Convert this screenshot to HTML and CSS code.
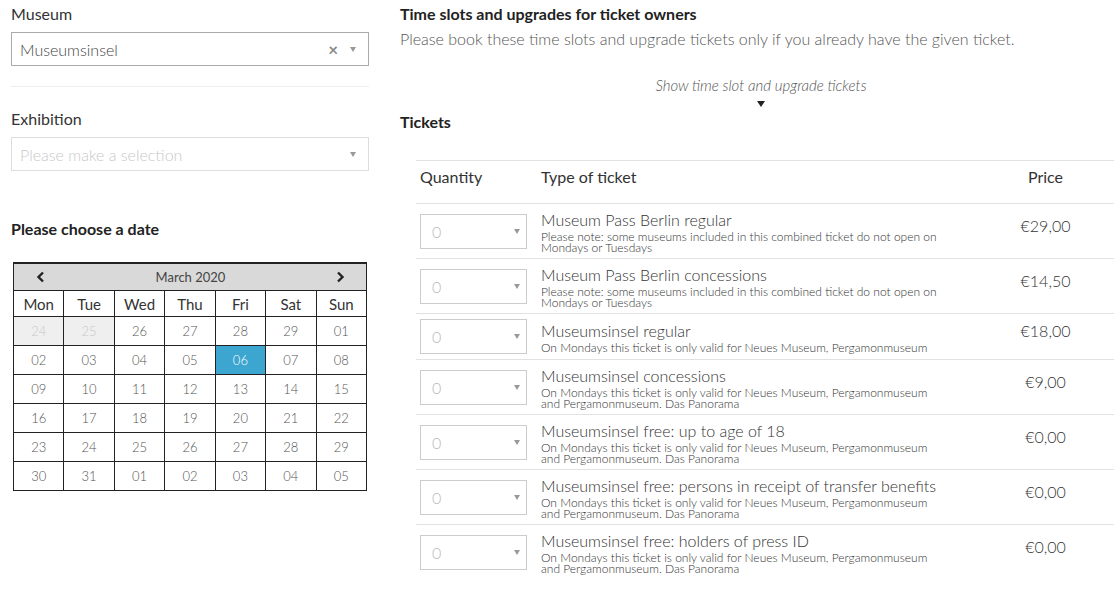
FILE: index.html
```html
<!DOCTYPE html>
<html lang="en">
<head>
<meta charset="utf-8">
<title>Tickets</title>
<link rel="stylesheet" href="styles.css">
</head>
<body>
<div class="page">
  <aside class="side">
    <div class="field">
      <label class="label">Museum</label>
      <div class="select">
        <span class="value">Museumsinsel</span>
        <span class="clear">×</span>
        <span class="caret"></span>
      </div>
    </div>
    <hr class="sep">
    <div class="field">
      <label class="label">Exhibition</label>
      <div class="select select-empty">
        <span class="value placeholder">Please make a selection</span>
        <span class="caret"></span>
      </div>
    </div>
    <h3 class="date-title">Please choose a date</h3>
    <table class="cal">
      <tr class="cal-head">
        <th colspan="7">
          <div class="cal-bar">
            <svg class="chev" width="9" height="12" viewBox="0 0 9 12"><path d="M7 1.5 L2.5 6 L7 10.5" fill="none" stroke="#222" stroke-width="2.4"/></svg>
            <span>March 2020</span>
            <svg class="chev" width="9" height="12" viewBox="0 0 9 12"><path d="M2 1.5 L6.5 6 L2 10.5" fill="none" stroke="#222" stroke-width="2.4"/></svg>
          </div>
        </th>
      </tr>
      <tr class="names"><td>Mon</td><td>Tue</td><td>Wed</td><td>Thu</td><td>Fri</td><td>Sat</td><td>Sun</td></tr>
      <tr class="dates"><td class="off">24</td><td class="off">25</td><td>26</td><td>27</td><td>28</td><td>29</td><td>01</td></tr>
      <tr class="dates"><td>02</td><td>03</td><td>04</td><td>05</td><td class="sel">06</td><td>07</td><td>08</td></tr>
      <tr class="dates"><td>09</td><td>10</td><td>11</td><td>12</td><td>13</td><td>14</td><td>15</td></tr>
      <tr class="dates"><td>16</td><td>17</td><td>18</td><td>19</td><td>20</td><td>21</td><td>22</td></tr>
      <tr class="dates"><td>23</td><td>24</td><td>25</td><td>26</td><td>27</td><td>28</td><td>29</td></tr>
      <tr class="dates"><td>30</td><td>31</td><td>01</td><td>02</td><td>03</td><td>04</td><td>05</td></tr>
    </table>
  </aside>

  <main class="main">
    <h3 class="h">Time slots and upgrades for ticket owners</h3>
    <p class="desc">Please book these time slots and upgrade tickets only if you already have the given ticket.</p>
    <div class="toggle">
      <span class="toggle-text">Show time slot and upgrade tickets</span>
      <span class="toggle-arrow"></span>
    </div>
    <h3 class="h tickets-h">Tickets</h3>

    <table class="tickets">
      <tr class="thead">
        <td class="c-qty">Quantity</td>
        <td class="c-type">Type of ticket</td>
        <td class="c-price">Price</td>
      </tr>
      <tr>
        <td class="c-qty"><div class="qty"><span>0</span><span class="caret"></span></div></td>
        <td class="c-type"><div class="t-title">Museum Pass Berlin regular</div><div class="t-note">Please note: some museums included in this combined ticket do not open on Mondays or Tuesdays</div></td>
        <td class="c-price price">€29,00</td>
      </tr>
      <tr>
        <td class="c-qty"><div class="qty"><span>0</span><span class="caret"></span></div></td>
        <td class="c-type"><div class="t-title">Museum Pass Berlin concessions</div><div class="t-note">Please note: some museums included in this combined ticket do not open on Mondays or Tuesdays</div></td>
        <td class="c-price price">€14,50</td>
      </tr>
      <tr>
        <td class="c-qty"><div class="qty"><span>0</span><span class="caret"></span></div></td>
        <td class="c-type"><div class="t-title">Museumsinsel regular</div><div class="t-note">On Mondays this ticket is only valid for Neues Museum, Pergamonmuseum</div></td>
        <td class="c-price price">€18,00</td>
      </tr>
      <tr>
        <td class="c-qty"><div class="qty"><span>0</span><span class="caret"></span></div></td>
        <td class="c-type"><div class="t-title">Museumsinsel concessions</div><div class="t-note">On Mondays this ticket is only valid for Neues Museum, Pergamonmuseum and Pergamonmuseum. Das Panorama</div></td>
        <td class="c-price price">€9,00</td>
      </tr>
      <tr>
        <td class="c-qty"><div class="qty"><span>0</span><span class="caret"></span></div></td>
        <td class="c-type"><div class="t-title">Museumsinsel free: up to age of 18</div><div class="t-note">On Mondays this ticket is only valid for Neues Museum, Pergamonmuseum and Pergamonmuseum. Das Panorama</div></td>
        <td class="c-price price">€0,00</td>
      </tr>
      <tr>
        <td class="c-qty"><div class="qty"><span>0</span><span class="caret"></span></div></td>
        <td class="c-type"><div class="t-title">Museumsinsel free: persons in receipt of transfer benefits</div><div class="t-note">On Mondays this ticket is only valid for Neues Museum, Pergamonmuseum and Pergamonmuseum. Das Panorama</div></td>
        <td class="c-price price">€0,00</td>
      </tr>
      <tr>
        <td class="c-qty"><div class="qty"><span>0</span><span class="caret"></span></div></td>
        <td class="c-type"><div class="t-title">Museumsinsel free: holders of press ID</div><div class="t-note">On Mondays this ticket is only valid for Neues Museum, Pergamonmuseum and Pergamonmuseum. Das Panorama</div></td>
        <td class="c-price price">€0,00</td>
      </tr>
    </table>
  </main>
</div>
</body>
</html>
```

FILE: styles.css
```css
html, body {
  margin: 0;
  padding: 0;
  background: #fff;
  overflow: hidden;
}
body {
  font-family: Lato, "Open Sans", "Liberation Sans", sans-serif;
  color: #333;
  font-size: 16px;
}
.page {
  display: flex;
  gap: 31px;
  padding: 0 0 0 11px;
}
.side {
  width: 358px;
  flex: none;
}
.main {
  width: 714px;
  flex: none;
}

/* left column */
.label {
  display: block;
  font-size: 16px;
  line-height: 20px;
  padding-top: 4px;
  color: #333;
}
.select {
  margin-top: 8px;
  height: 34px;
  box-sizing: border-box;
  border: 1px solid #aaa;
  display: flex;
  align-items: center;
  padding: 0 12px 0 8px;
  color: #444;
}
.select-empty {
  border-color: #ddd;
}
.value {
  flex: 1;
  font-size: 16px;
  font-weight: 300;
}
.placeholder {
  color: #c8c8c8;
}
.clear {
  color: #888;
  font-size: 17px;
  font-weight: 700;
  margin-right: 12px;
  line-height: 1;
}
.caret {
  width: 0;
  height: 0;
  border-left: 3.5px solid transparent;
  border-right: 3.5px solid transparent;
  border-top: 5px solid #999;
}
.sep {
  border: 0;
  border-top: 1px solid #eee;
  margin: 20px 0 18px;
}
.date-title {
  margin: 48px 0 0;
  font-size: 16px;
  font-weight: 700;
  line-height: 20px;
  color: #222;
}
.cal {
  margin: 23px 0 0 2px;
  width: 354px;
  border-collapse: collapse;
  table-layout: fixed;
  border: 1px solid #222;
  border-top-width: 2px;
}
.cal th {
  padding: 0;
  background: #d9d9d9;
  font-weight: 400;
  height: 26px;
  border: 1px solid #222;
  border-top-width: 2px;
}
.cal-bar {
  display: flex;
  align-items: center;
  justify-content: space-between;
  padding: 0 21px 0 22px;
  font-size: 13px;
  color: #444;
}
.cal td {
  border: 1px solid #222;
  text-align: center;
  padding: 0;
}
.names td {
  height: 25px;
  font-size: 15px;
  color: #333;
}
.dates td {
  height: 28px;
  font-size: 13px;
  font-weight: 300;
  color: #555;
}
.dates td.off {
  background: #efefef;
  color: #c8c8c8;
}
.dates td.sel {
  background: #3ca6d1;
  color: #fff;
}

/* right column */
.h {
  margin: 0;
  font-size: 16px;
  font-weight: 700;
  line-height: 20px;
  padding-top: 4px;
  color: #222;
}
.desc {
  margin: 5px 0 0;
  font-size: 16px;
  line-height: 20px;
  color: #555;
  font-weight: 300;
}
.toggle {
  display: flex;
  flex-direction: column;
  align-items: center;
  margin-top: 26px;
  padding-left: 8px;
}
.toggle-text {
  font-size: 15px;
  font-style: italic;
  font-weight: 300;
  color: #555;
  line-height: 20px;
}
.toggle-arrow {
  margin-top: 6px;
  width: 0;
  height: 0;
  border-left: 4.5px solid transparent;
  border-right: 4.5px solid transparent;
  border-top: 6px solid #222;
}
.tickets-h {
  margin-top: 5px;
  padding-top: 0;
}
.tickets {
  margin: 28px 0 0 16px;
  width: 698px;
  border-collapse: collapse;
  table-layout: fixed;
}
.tickets td {
  border-top: 1px solid #e2e2e2;
  padding: 5px 4px;
  vertical-align: middle;
}
.thead td {
  padding: 6px 4px 16px;
  font-size: 16px;
  line-height: 20px;
  color: #333;
}
.c-qty { width: 113px; }
.c-type { width: 410px; }
.c-price { text-align: center; padding-left: 22px !important; padding-right: 0 !important; }
.qty {
  width: 107px;
  height: 35px;
  box-sizing: border-box;
  border: 1px solid #ccc;
  display: flex;
  align-items: center;
  justify-content: space-between;
  padding: 0 6px 0 11px;
  color: #bbb;
  font-weight: 300;
  font-size: 16px;
}
.t-title {
  font-size: 16px;
  line-height: 22px;
  font-weight: 300;
  color: #333;
}
.t-note {
  max-width: 405px;
  font-size: 12px;
  line-height: 11px;
  font-weight: 300;
  color: #333;
}
.price {
  font-size: 16px;
  font-weight: 300;
  color: #333;
  padding-bottom: 17px !important;
}
```
